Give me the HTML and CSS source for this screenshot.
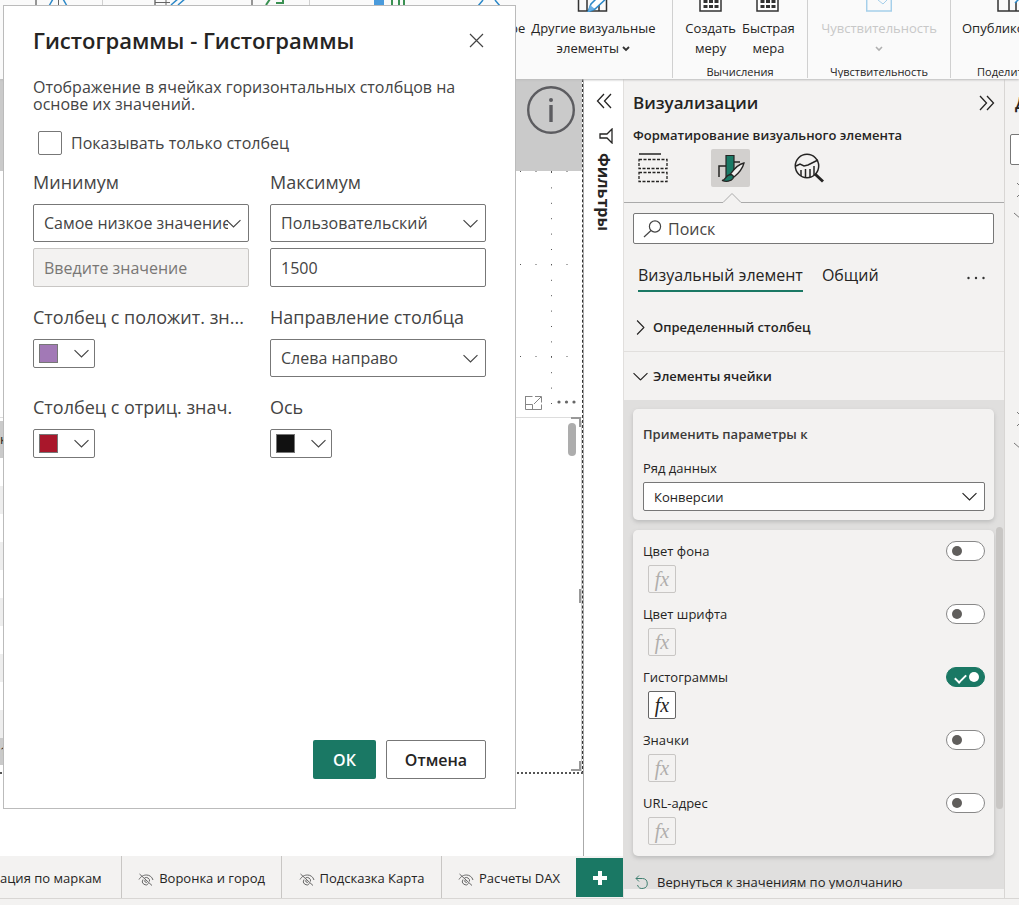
FILE: index.html
```html
<!DOCTYPE html>
<html lang="ru">
<head>
<meta charset="utf-8">
<title>Гистограммы</title>
<link rel="stylesheet" href="styles.css">
</head>
<body>
<svg class="defs" aria-hidden="true">
  <symbol id="chev" viewBox="0 0 14 8"><path d="M.5.8 7 7.2 13.500.8" fill="none" stroke="currentColor" stroke-width="1.1"/></symbol>
  <symbol id="hidden-eye" viewBox="0 0 16 14"><path d="M1 6.500C3 3 6 2 8.500 2c3 0 5.500 1.800 6.500 5M1.500 1l12.500 11.500M5 6.500a3.300 3.300 0 0 0 5.500 4M6.500 5a3.300 3.300 0 0 1 5 3.500M7.200 7a1.400 1.400 0 1 0 2 2" fill="none" stroke="currentColor"/></symbol>
  <symbol id="calc" viewBox="0 0 24 24"><path d="M1 0v23h21V0" fill="#fff" stroke="#333" stroke-width="1.500"/><path d="M4.500 12h4v3h-4zM10 12h4v3h-4zM15.500 12h4v3h-4zM4.500 17h4v3h-4zM10 17h4v3h-4zM15.500 17h4v3h-4z" fill="#333"/></symbol>
</svg>

<div class="app">
  <header class="ribbon">
    <section class="group visuals">
      <svg class="strip" viewBox="0 0 510 12" aria-hidden="true" fill="none">
        <path d="M36 0v12M155 0v12M252 0v12M375 0v12" stroke="#333"/>
        <path d="M49 6l4-7M67 6l-4-7M171 5l8-7M178 5l8-7M478 6l5-6M500 6l-5-6" stroke="#2b88c8" stroke-width="1.500"/>
        <path d="M58.500 0v12M155 2.500h15M166 0v5" stroke="#666"/>
        <path d="M266 5l4-6M276 3h7V-2" stroke="#3a9152" stroke-width="2"/>
        <path d="M374 0h10v12h-10z" fill="#4a9bdc"/>
        <path d="M392 0v12M399 0v12M404 0v12" stroke="#3a9152" stroke-width="2"/>
        <path d="M102.500 0v12M309.500 0v12" stroke="#d0d0d0"/>
      </svg>
      <span class="cut-label">ре</span>
      <button class="tool wide">
        <svg class="tool-icon large" viewBox="0 0 32 24" aria-hidden="true" fill="none"><path d="M1.500 8v15h28V8M10 8v15M22 8v15" stroke="#333" stroke-width="1.500"/><path d="M11 24l3-8L27 3l5 5-14 13z" fill="#fff" stroke="#2b88c8" stroke-width="1.500"/><path d="M11 24l2-7 5 4z" fill="#69afe5"/></svg>
        <span>Другие визуальные<br>элементы <svg class="tiny" viewBox="0 0 8 6" aria-hidden="true"><path d="M1 1l3 3 3-3" fill="none" stroke="#333" stroke-width="1.800"/></svg></span>
      </button>
    </section>
    <section class="group">
      <div class="tools">
        <button class="tool"><svg class="tool-icon" aria-hidden="true"><use href="#calc"/></svg><span>Создать<br>меру</span></button>
        <button class="tool"><svg class="tool-icon" aria-hidden="true"><use href="#calc"/></svg><span>Быстрая<br>мера</span></button>
      </div>
      <p class="caption">Вычисления</p>
    </section>
    <section class="group">
      <div class="tools">
        <button class="tool" disabled><svg class="tool-icon" viewBox="0 0 26 24" aria-hidden="true" fill="none" stroke="#a5cfea"><path d="M.7 0v23h24.600V0" stroke-width="1.500"/><path d="M12 12l5 4 4-4"/></svg><span>Чувствительность<br><svg class="tiny" viewBox="0 0 8 6" aria-hidden="true"><path d="M1 1l3 3 3-3" fill="none" stroke="#b0b0b0" stroke-width="1.600"/></svg></span></button>
      </div>
      <p class="caption">Чувствительность</p>
    </section>
    <section class="group share">
      <button class="tool"><svg class="tool-icon large" viewBox="0 0 32 24" aria-hidden="true" fill="none"><path d="M6 0v23h26M17 11v12M24 14v9" stroke="#333" stroke-width="1.500"/><path d="M23 15l6-6" stroke="#2b88c8" stroke-width="1.500"/></svg><span>Опубликовать</span></button>
      <p class="caption">Поделиться</p>
    </section>
  </header>

  <div class="workspace">
    <main class="report">
      <div class="canvas-row">
        <div class="canvas">
          <div class="page">
            <div class="banner"><svg class="info" viewBox="0 0 48 48" role="img" aria-label="Сведения"><circle cx="24" cy="24" r="22.800" fill="none" stroke="#5c5c60" stroke-width="2.400"/><path d="M24 19v17" stroke="#5c5c60" stroke-width="3.400"/><circle cx="24" cy="14" r="2" fill="#5c5c60"/></svg></div>
            <div class="plot">
              <svg class="dots" viewBox="0 0 66 247" aria-hidden="true" fill="none" stroke="#555">
                <path d="M35.500 1v246" stroke-dasharray="1 14.400"/>
                <path d="M4 .500h50M4 93.500h50M4 185.500h50" stroke-dasharray="1 14.500"/>
                <path d="M9.500 225.500h7M9.500 225v13.500h16v-5M9.500 233.500h7v5M19 225.500h6.500v6M25 226l-7 7" stroke="#858585"/>
                <g fill="#666" stroke="none"><circle cx="43" cy="231" r="1.600"/><circle cx="50.500" cy="231" r="1.600"/><circle cx="58" cy="231" r="1.600"/></g>
              </svg>
            </div>
            <div class="grid">
              <div class="grid-rows"><div class="row strong">к</div><div class="row"></div><div class="row alt"></div><div class="row"></div><div class="row alt"></div><div class="row"></div><div class="row alt"></div><div class="row"></div><div class="row alt"></div><div class="row"></div><div class="row alt"></div><div class="row strong total">1</div></div>
              <div class="grid-side"><span class="thumb"></span><span class="handle top"></span><span class="handle middle"></span><span class="handle bottom"></span></div>
            </div>
          </div>
        </div>
        <aside class="filters">
          <button class="icon-btn" aria-label="Развернуть"><svg width="16" height="16" viewBox="0 0 16 16" aria-hidden="true"><path d="M8 1 1.500 8 8 15M15 1 8.500 8l6.500 7" fill="none" stroke="#252423" stroke-width="1.300"/></svg></button>
          <svg class="funnel" viewBox="0 0 14 16" aria-hidden="true"><path d="M13 1v14L8 10H1V6h7z" fill="none" stroke="#252423" stroke-width="1.300"/></svg>
          <h2>Фильтры</h2>
        </aside>
      </div>
      <nav class="tabs">
        <button class="tab first">ация по маркам</button>
        <button class="tab"><svg aria-hidden="true"><use href="#hidden-eye"/></svg>Воронка и город</button>
        <button class="tab"><svg aria-hidden="true"><use href="#hidden-eye"/></svg>Подсказка Карта</button>
        <button class="tab last"><svg aria-hidden="true"><use href="#hidden-eye"/></svg>Расчеты DAX</button>
        <button class="add" aria-label="Создать страницу"><svg width="14" height="14" viewBox="0 0 14 14" aria-hidden="true"><path d="M7 0v14M0 7h14" stroke="#fff" stroke-width="4"/></svg></button>
      </nav>
    </main>

    <aside class="viz">
      <div class="viz-head"><h2>Визуализации</h2><button class="icon-btn" aria-label="Свернуть"><svg width="16" height="16" viewBox="0 0 16 16" aria-hidden="true"><path d="M1 1l6.500 7L1 15M8 1l6.500 7L8 15" fill="none" stroke="#252423" stroke-width="1.300"/></svg></button></div>
      <h3 class="viz-sub">Форматирование визуального элемента</h3>
      <div class="modes">
        <button class="mode" aria-label="Поля"><svg width="30" height="30" viewBox="0 0 30 30" aria-hidden="true" fill="none" stroke="#252423"><path d="M1 1h22" stroke-width="1.500"/><path d="M1 6.500h28v9H1zM1 19.500h28v9H1z" stroke-dasharray="3 1.500" stroke-width="1.300"/></svg></button>
        <button class="mode on" aria-label="Формат"><svg width="28" height="30" viewBox="0 0 28 30" aria-hidden="true"><path d="M9 2.500h8V20l-4 4H9z" fill="#1a7a66" stroke="#252423" stroke-width="1.200"/><path d="M2 24V13h7M17 9h6" fill="none" stroke="#252423" stroke-width="1.500"/><path d="M13.500 21C17 16 22 11 27 10c-1 4-5 10-10 14z" fill="#f0efee" stroke="#252423" stroke-width="1.300"/><path d="M5 27.500c4 0 3-5 8-6 3 0 4 2 3 4-2 3-7 3.500-11 2z" fill="#1a7a66" stroke="#252423" stroke-width="1.300"/></svg></button>
        <button class="mode" aria-label="Аналитика"><svg width="30" height="30" viewBox="0 0 30 30" aria-hidden="true" fill="none" stroke="#252423" stroke-width="1.500"><circle cx="13" cy="13" r="11.700"/><path d="M2 13l4-2 4 2 4-1 10-5M7 23v-6M11.500 24.500V16M16 24v-8M20 22v-9"/><path d="M21 21l8 7.500" stroke-width="3"/></svg></button>
      </div>
      <svg class="notch" viewBox="0 0 380 10" preserveAspectRatio="xMinYMin meet" aria-hidden="true"><path d="M0 9.500h99l9-9 9 9h263" fill="none" stroke="#aaa"/></svg>
      <label class="search"><svg width="19" height="18" viewBox="0 0 19 18" aria-hidden="true"><circle cx="12" cy="6.500" r="5.600" fill="none" stroke="#444" stroke-width="1.200"/><path d="M8 10.500 1 17" stroke="#444" stroke-width="1.200"/></svg><input type="text" placeholder="Поиск" aria-label="Поиск"></label>
      <div class="viz-tabs"><button class="vt on">Визуальный элемент</button><button class="vt">Общий</button><button class="more" aria-label="Еще"><svg width="18" height="4" viewBox="0 0 18 4" aria-hidden="true" fill="#333"><circle cx="1.500" cy="2" r="1.200"/><circle cx="9" cy="2" r="1.200"/><circle cx="16.500" cy="2" r="1.200"/></svg></button></div>
      <button class="sect"><svg class="right" viewBox="0 0 14 8" aria-hidden="true"><use href="#chev"/></svg>Определенный столбец</button>
      <button class="sect open"><svg viewBox="0 0 14 8" aria-hidden="true"><use href="#chev"/></svg>Элементы ячейки</button>
      <div class="well">
        <div class="card apply">
          <h4>Применить параметры к</h4>
          <label for="series">Ряд данных</label>
          <div class="pick small"><select id="series"><option>Конверсии</option></select><svg aria-hidden="true"><use href="#chev"/></svg></div>
        </div>
        <div class="card options">
          <div class="opt"><label for="o1">Цвет фона</label><input id="o1" type="checkbox" role="switch" class="switch"><button class="fx" disabled>fx</button></div>
          <div class="opt"><label for="o2">Цвет шрифта</label><input id="o2" type="checkbox" role="switch" class="switch"><button class="fx" disabled>fx</button></div>
          <div class="opt"><label for="o3">Гистограммы</label><input id="o3" type="checkbox" role="switch" class="switch" checked><button class="fx">fx</button></div>
          <div class="opt"><label for="o4">Значки</label><input id="o4" type="checkbox" role="switch" class="switch"><button class="fx" disabled>fx</button></div>
          <div class="opt"><label for="o5">URL-адрес</label><input id="o5" type="checkbox" role="switch" class="switch"><button class="fx" disabled>fx</button></div>
        </div>
        <button class="reset"><svg width="14" height="15" viewBox="0 0 14 15" aria-hidden="true"><path d="M4 .5 1 3.500l3 3M1 3.500h6.500a5 5 0 1 1-5 6.500" fill="none" stroke="#3f7f70"/></svg>Вернуться к значениям по умолчанию</button>
        <span class="bar"></span>
      </div>
    </aside>

    <aside class="data">
      <h2>Данные</h2>
      <span class="data-search"></span>
      <svg class="data-tree" width="30" height="280" viewBox="0 0 30 280" aria-hidden="true" fill="none" stroke="#777"><path d="M12 6l7 7-7 7M9 36l7 6 7-6M12 235l7 7-7 7M9 266l7 6 7-6"/></svg>
    </aside>
  </div>
  <footer class="status"></footer>
</div>

<section class="dialog" role="dialog" aria-labelledby="dlg-title">
  <div class="dlg-head"><h1 id="dlg-title">Гистограммы - Гистограммы</h1><button class="icon-btn" aria-label="Закрыть"><svg width="15" height="15" viewBox="0 0 15 15" aria-hidden="true"><path d="M1 1l13 13M14 1 1 14" stroke="#444" stroke-width="1.200"/></svg></button></div>
  <p class="desc">Отображение в ячейках горизонтальных столбцов на основе их значений.</p>
  <label class="only"><input type="checkbox">Показывать только столбец</label>
  <div class="fields">
    <div class="field">
      <label for="min">Минимум</label>
      <div class="pick"><select id="min"><option>Самое низкое значение</option></select><svg aria-hidden="true"><use href="#chev"/></svg></div>
      <input type="text" class="text" placeholder="Введите значение" aria-label="Минимум, значение" disabled>
    </div>
    <div class="field">
      <label for="max">Максимум</label>
      <div class="pick"><select id="max"><option>Пользовательский</option></select><svg aria-hidden="true"><use href="#chev"/></svg></div>
      <input type="text" class="text" value="1500" aria-label="Максимум, значение">
    </div>
    <div class="field">
      <label for="pos">Столбец с положит. зн...</label>
      <button id="pos" class="color"><span class="swatch violet"></span><svg aria-hidden="true"><use href="#chev"/></svg></button>
    </div>
    <div class="field">
      <label for="dir">Направление столбца</label>
      <div class="pick"><select id="dir"><option>Слева направо</option></select><svg aria-hidden="true"><use href="#chev"/></svg></div>
    </div>
    <div class="field">
      <label for="neg">Столбец с отриц. знач.</label>
      <button id="neg" class="color"><span class="swatch red"></span><svg aria-hidden="true"><use href="#chev"/></svg></button>
    </div>
    <div class="field">
      <label for="axis">Ось</label>
      <button id="axis" class="color"><span class="swatch black"></span><svg aria-hidden="true"><use href="#chev"/></svg></button>
    </div>
  </div>
  <div class="actions"><button class="ok">ОК</button><button class="cancel">Отмена</button></div>
</section>
</body>
</html>
```
FILE: styles.css
```css
* { box-sizing: border-box; }
body { margin: 0; font: 13px/18px "Open Sans", "Noto Sans", sans-serif; color: #252423; background: #fff; }
h1, h2, h3, h4, p { margin: 0; }
button, input, select { font: inherit; color: inherit; margin: 0; }
button { padding: 0; border: 0; background: none; }
svg { display: block; flex: none; }
.defs { position: absolute; width: 0; height: 0; }
.icon-btn { display: flex; }
.app { display: flex; flex-direction: column; height: 100vh; overflow: hidden; }

/* Ribbon */
.ribbon { position: relative; display: grid; grid-template-columns: 1fr 135px 143px 68px; height: 79px; background: #fafafa; box-shadow: 0 1px 2px #bbb; z-index: 1; }
.group { display: flex; flex-direction: column; justify-content: space-between; align-items: center; overflow: hidden; height: 78px; border-right: 1px solid #d0d0d0; }
.group.visuals { flex-direction: row; justify-content: flex-start; align-items: flex-start; }
.strip { width: 510px; height: 12px; }
.cut-label { margin-top: 18px; line-height: 20px; padding-right: 6px; }
.tools { display: flex; gap: 6px; }
.tool { display: flex; flex-direction: column; align-items: center; text-align: center; line-height: 20px; white-space: nowrap; }
.tool:disabled { color: #c8c8c8; font-weight: 500; }
.tool-icon { width: 26px; height: 24px; margin-top: -12px; margin-bottom: 6px; }
.tool-icon.large { width: 32px; }
.tiny { display: inline-block; width: 8px; height: 6px; vertical-align: 1px; }
.caption { font-size: 11px; line-height: 12px; }
.share { align-items: flex-start; padding-left: 11px; border: 0; }
.share .caption { padding-left: 15px; }

/* Report area */
.workspace { flex: 1; min-height: 0; display: grid; grid-template-columns: 1fr 381px 14px; }
.report { min-width: 0; display: flex; flex-direction: column; border-right: 1px solid #e1dfdd; }
.canvas-row { flex: 1; min-height: 0; display: flex; }
.canvas { flex: 1; border-right: 1px solid #aaa; }
.page { border-right: 1px dashed #333; border-bottom: 2px dotted #555; }
.banner { display: flex; justify-content: flex-end; height: 92px; padding: 7px 7px; background: #cacaca; }
.info { width: 48px; height: 48px; }
.plot { display: flex; justify-content: flex-end; height: 247px; border-bottom: 1px solid #ddd; }
.dots { width: 66px; height: 247px; }
.grid { display: flex; justify-content: space-between; padding-top: 3px; }
.grid-rows { width: 50%; }
.row { height: 28px; }
.row.alt { background: #eee; }
.row.strong { height: 37px; background: #cacaca; line-height: 36px; }
.row.total { height: 27px; margin-bottom: 7px; line-height: 26px; }
.grid-side { position: relative; width: 14px; border-right: 1px solid #ccc; }
.thumb { display: block; width: 8px; height: 33px; margin-top: 2px; border-radius: 4px; background: #adadad; }
.handle { position: absolute; right: 0; width: 10px; height: 10px; border: 0 solid #999; }
.handle.top { top: -4px; border-width: 2px 2px 0 0; }
.handle.middle { top: 48%; height: 14px; border-right-width: 2px; }
.handle.bottom { bottom: 1px; border-width: 0 2px 2px 0; }
.filters { display: flex; flex-direction: column; align-items: center; width: 39px; padding-top: 14px; }
.funnel { width: 14px; height: 16px; margin: 19px 0 9px 5px; }
.filters h2 { writing-mode: vertical-rl; font-size: 16px; line-height: 20px; font-weight: 700; }
.tabs { display: flex; height: 42px; background: #f3f2f1; }
.tab { display: flex; align-items: center; justify-content: center; gap: 5px; flex: 160 1 0; padding-top: 2px; white-space: nowrap; border-right: 1px solid #c8c6c4; }
.tab svg { width: 16px; height: 14px; margin-top: 3px; color: #666; }
.tab.first { flex-grow: 122; justify-content: flex-start; }
.tab.last { flex-grow: 135; border: 0; }
.add { display: flex; align-items: center; justify-content: center; width: 47px; margin: 2px 0 1px; background: #1a7864; }

/* Visualizations pane */
.viz { display: flex; flex-direction: column; min-height: 0; background: #f3f2f1; border-right: 1px solid #d8d6d4; overflow: hidden; }
.viz-head { display: flex; justify-content: space-between; align-items: center; padding: 12px 9px 0; }
.viz-head h2 { font-size: 17px; line-height: 24px; font-weight: 600; }
.viz-sub { padding: 11px 9px 0; font-size: 13px; line-height: 18px; font-weight: 600; }
.modes { display: flex; gap: 39px; padding: 5px 9px 6px; }
.mode { display: flex; align-items: center; justify-content: center; width: 39px; height: 38px; border-radius: 2px; }
.mode.on { background: #d2d0ce; }
.notch { width: 100%; height: 10px; }
.search { display: flex; align-items: center; gap: 6px; height: 31px; margin: 10px 10px 0 9px; padding: 0 9px; background: #fff; border: 1px solid #777; border-radius: 2px; }
.search input { flex: 1; min-width: 0; border: 0; padding: 0; background: none; font-size: 16px; }
.search input::placeholder { color: #484644; opacity: 1; }
.viz-tabs { display: flex; align-items: center; gap: 19px; padding: 19px 19px 11px 14px; }
.vt { padding-bottom: 2px; font-size: 16px; line-height: 25px; border-bottom: 2px solid transparent; }
.vt.on { font-weight: 500; border-color: #1a7864; }
.more { margin-left: auto; }
.sect { display: flex; align-items: center; gap: 5px; height: 49px; flex: none; padding: 0 9px; font-weight: 600; border-bottom: 1px solid #e1dfdd; }
.sect.open { height: 48px; border: 0; }
.sect svg { width: 15px; height: 9px; }
.sect svg.right { transform: rotate(-90deg); }
.well { position: relative; flex: 1; min-height: 0; display: flex; flex-direction: column; gap: 10px; margin-bottom: 9px; padding: 9px 10px 0 9px; background: #e0dfde; overflow: hidden; }
.card { flex: none; padding: 0 9px; background: #f3f2f1; border-radius: 5px; box-shadow: 0 2px 4px #bbb; }
.apply { display: flex; flex-direction: column; padding: 16px 9px 9px 10px; }
.apply h4 { font-size: 13px; line-height: 19px; font-weight: 600; color: #3b3a39; }
.apply label { padding: 15px 0 5px; }
.options { padding: 11px 9px 0 10px; }
.opt { display: grid; grid-template-columns: 1fr 39px; height: 63px; align-content: start; row-gap: 4px; }
.opt label { line-height: 20px; }
.switch { appearance: none; position: relative; width: 39px; height: 20px; border: 1px solid #888; border-radius: 10px; background: #fff; }
.switch::before { content: ""; position: absolute; left: 5px; top: 4px; width: 10px; height: 10px; border-radius: 5px; background: #605e5c; }
.switch:checked { background: #1a7864; border-color: #1a7864; }
.switch:checked::before { left: 22px; background: #fff; }
.switch:checked::after { content: ""; position: absolute; left: 10px; top: 4px; width: 5px; height: 9px; border: solid #fff; border-width: 0 2px 2px 0; transform: rotate(45deg); }
.fx { width: 28px; height: 28px; margin-left: 5px; background: #fff; border: 1px solid #666; border-radius: 2px; font: italic 20px/20px "Liberation Serif", serif; }
.fx:disabled { color: #b0aeac; background: #f3f2f1; border-color: #c8c6c4; }
.reset { display: flex; align-items: center; gap: 8px; padding: 7px 2px 0; white-space: nowrap; }
.bar { position: absolute; right: 1px; top: 127px; width: 7px; height: 282px; border-radius: 4px; background: #c8c6c4; }

/* Data pane */
.data { display: flex; flex-direction: column; min-width: 0; overflow: hidden; background: #f3f2f1; }
.data h2 { padding: 12px 0 0 10px; font-size: 17px; line-height: 24px; font-weight: 600; }
.data-search { flex: none; width: 200px; height: 31px; margin: 19px 0 12px 5px; background: #fff; border: 1px solid #777; border-radius: 2px; }
.status { height: 7px; background: #f3f2f1; border-top: 1px solid #d8d6d4; z-index: 1; }

/* Dialog */
.dialog { position: absolute; z-index: 2; left: 3px; top: 5px; width: 513px; height: 804px; display: flex; flex-direction: column; padding: 18px 29px 29px; background: #fff; border: 1px solid #bbb; font-size: 16px; color: #444; }
.dlg-head { display: flex; justify-content: space-between; align-items: center; padding-right: 2px; }
.dlg-head h1 { font-size: 22px; line-height: 32px; font-weight: 600; color: #252423; }
.desc { padding-top: 23px; line-height: 17px; }
.only { display: flex; align-items: center; gap: 9px; padding: 18px 0 14px 5px; }
.only input { appearance: none; width: 24px; height: 24px; border: 1px solid #777; border-radius: 2px; background: #fff; }
.fields { display: grid; grid-template-columns: 216px 216px; column-gap: 21px; row-gap: 17px; }
.field { display: flex; flex-direction: column; min-width: 0; }
.field label { padding-bottom: 8px; font-size: 18px; line-height: 27px; white-space: nowrap; }
.pick { display: grid; align-items: center; }
.pick select, .pick svg { grid-area: 1 / 1; }
.pick select { appearance: none; width: 100%; height: 38px; padding: 0 20px 0 10px; font-size: 16px; background: #fff; border: 1px solid #777; border-radius: 2px; }
.pick svg { justify-self: end; width: 15px; height: 9px; margin-right: 8px; pointer-events: none; }
.pick.small select { height: 29px; font-size: 13px; }
.text { height: 39px; margin-top: 6px; padding: 0 10px; border: 1px solid #777; border-radius: 2px; background: #fff; }
.text:disabled { background: #f3f2f1; border-color: #c8c6c4; }
.text::placeholder { color: #797775; opacity: 1; }
.color { display: flex; align-items: center; justify-content: space-between; width: 62px; height: 29px; padding: 0 5px; border: 1px solid #777; border-radius: 2px; }
.color svg { width: 15px; height: 9px; }
.swatch { width: 19px; height: 19px; border: 1px solid #777; }
.violet { background: #a279b6; }
.red { background: #a9172b; }
.black { background: #111; }
.actions { display: flex; justify-content: flex-end; gap: 10px; margin-top: auto; }
.actions button { height: 39px; border-radius: 2px; font-weight: 600; }
.ok { width: 63px; background: #1a7864; color: #fff; }
.cancel { width: 100px; border: 1px solid #777; color: #252423; }
```
